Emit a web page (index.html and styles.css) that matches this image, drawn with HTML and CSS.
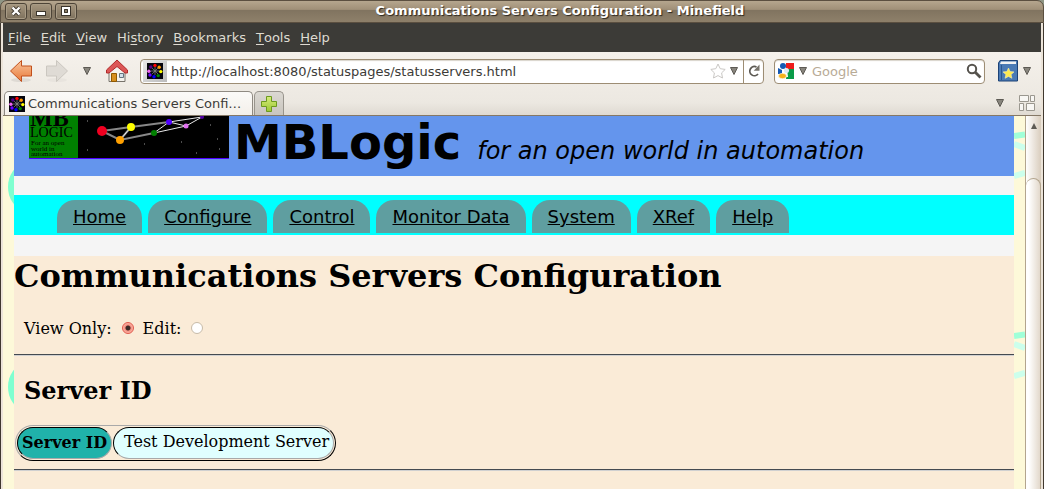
FILE: index.html
```html
<!DOCTYPE html>
<html lang="en">
<head>
<meta charset="utf-8">
<title>Communications Servers Configuration</title>
<link rel="stylesheet" href="styles.css">
</head>
<body>
<svg width="0" height="0" class="defs" aria-hidden="true">
  <defs>
    <linearGradient id="orange" x1="0" y1="0" x2="0" y2="1"><stop offset="0" stop-color="#f9c49a"/><stop offset="1" stop-color="#e8793a"/></linearGradient>
    <linearGradient id="lime" x1="0" y1="0" x2="0" y2="1"><stop offset="0" stop-color="#d6ec7c"/><stop offset="1" stop-color="#9cc832"/></linearGradient>
    <symbol id="favicon" viewBox="0 0 16 16">
      <rect width="16" height="16" fill="#04040e"/>
      <path d="M8 8V4M8 8l3-3M8 8h4M8 8l3 3M8 8v4M8 8l-3 3M8 8H4M8 8L5 5" stroke="#777" stroke-width=".8"/>
      <circle cx="8" cy="8" r="1.300" fill="#777"/>
      <circle cx="8" cy="2.400" r="1.700" fill="#f00"/><circle cx="12.200" cy="4.200" r="1.700" fill="#f90"/>
      <circle cx="13.800" cy="8.600" r="1.700" fill="#ff0"/><circle cx="11.200" cy="12.600" r="1.700" fill="#080"/>
      <circle cx="7" cy="13.800" r="1.700" fill="#00f"/><circle cx="3" cy="12" r="1.700" fill="#60f"/>
      <circle cx="1.900" cy="8.200" r="1.700" fill="#e6e"/><circle cx="3.800" cy="4" r="1.700" fill="#508"/>
    </symbol>
    <symbol id="caret" viewBox="0 0 8 8"><path d="M.5.5h7L4 7.500z" fill="#88857d" stroke="#5d5a54"/></symbol>
  </defs>
</svg>
<div class="window">
  <header class="titlebar">
    <div class="window-buttons">
      <button class="wbtn" aria-label="Close"><svg width="10" height="10" viewBox="0 0 10 10"><path d="M1.500 1.500l7 7M8.500 1.500l-7 7" stroke="#3b352c" stroke-width="4"/><path d="M1.500 1.500l7 7M8.500 1.500l-7 7" stroke="#fff" stroke-width="2.400"/></svg></button>
      <button class="wbtn" aria-label="Minimize"><svg width="10" height="10" viewBox="0 0 10 10"><path d="M0 5h10v5H0z" fill="#3b352c"/><path d="M1 6h8v3H1z" fill="#fff"/></svg></button>
      <button class="wbtn" aria-label="Maximize"><svg width="10" height="10" viewBox="0 0 10 10"><path d="M0 0h10v10H0z" fill="#3b352c"/><path d="M2 2h6v6H2z" fill="#8c8069" stroke="#fff" stroke-width="2"/><path d="M3.500 3.500h3v3h-3z" fill="none" stroke="#3b352c"/></svg></button>
    </div>
    <div class="window-title">Communications Servers Configuration - Minefield</div>
  </header>
  <div class="frame">
    <nav class="menubar">
      <button><u>F</u>ile</button><button><u>E</u>dit</button><button><u>V</u>iew</button><button>Hi<u>s</u>tory</button><button><u>B</u>ookmarks</button><button><u>T</u>ools</button><button><u>H</u>elp</button>
    </nav>
    <div class="chrome">
      <div class="toolbar">
        <div class="nav-buttons">
          <button aria-label="Back"><svg width="24" height="24" viewBox="0 0 24 24"><ellipse cx="12" cy="21" rx="10" ry="2" fill="#dedad4"/><path d="M1.500 12L12.500 1.500V7H22.500v10H12.500v5.500z" fill="url(#orange)" stroke="#c2501c"/></svg></button>
          <button aria-label="Forward"><svg width="24" height="24" viewBox="0 0 24 24"><ellipse cx="12" cy="21" rx="10" ry="2" fill="#e8e4de"/><path d="M22.500 12L11.500 1.500V7H1.500v10h10v5.500z" fill="#dfdbd5" stroke="#cbc7c0"/></svg></button>
          <button aria-label="Recent pages"><svg width="8" height="8"><use href="#caret"/></svg></button>
          <button aria-label="Home"><svg width="24" height="24" viewBox="0 0 24 24"><path d="M4 11l8-7 8 7v11.500H4z" fill="#f4f2ed" stroke="#77736b"/><path d="M6.500 14.500h5v8h-5z" fill="#d78f1e" stroke="#8f5902"/><path d="M14.500 14.500h4v4h-4z" fill="#d3e0ea" stroke="#64737e"/><path d="M12 1L1.500 11v3h2.500L12 7.500l8 6.500h2.500v-3z" fill="#dc5656" stroke="#b02a2a"/></svg></button>
        </div>
        <div class="field url">
          <span class="site-icon"><svg width="16" height="16"><use href="#favicon"/></svg></span>
          <input type="text" aria-label="Address" value="http://localhost:8080/statuspages/statusservers.html">
          <button aria-label="Bookmark this page"><svg width="16" height="16" viewBox="0 0 16 16"><path d="M8 1l2.200 4.700 5 .7-3.600 3.500.9 5.100L8 12.600 3.500 15l.9-5.100L.8 6.400l5-.7z" fill="#fff" stroke="#c9c7c4"/></svg></button>
          <button class="drop" aria-label="Address history"><svg width="8" height="8"><use href="#caret"/></svg></button>
          <button class="reload" aria-label="Reload"><svg width="14" height="14" viewBox="0 0 14 14"><path d="M9.500 3A4.600 4.600 0 1 0 11 10" fill="none" stroke="#5d5a54" stroke-width="1.800"/><path d="M12.500.5v6.200H6.700z" fill="#77736b"/></svg></button>
        </div>
        <div class="field search">
          <button aria-label="Search engine" class="engine"><svg width="16" height="16" viewBox="0 0 16 16"><path d="M8 0h8v7H8z" fill="#ed1c1c"/><path d="M9 6h7v10H8z" fill="#0a9b48"/><path d="M1 6h8l1 8H0z" fill="#fff"/><ellipse cx="5" cy="3" rx="3" ry="3" fill="#1559b5"/><path d="M0 5l4 2v4H0z" fill="#1559b5"/><circle cx="8.500" cy="7.500" r="2.500" fill="#dfe9f5"/><ellipse cx="4.500" cy="13" rx="4" ry="2.700" fill="#f6b21a" stroke="#fff" stroke-width=".6"/></svg><svg width="8" height="8"><use href="#caret"/></svg></button>
          <input type="text" aria-label="Search" placeholder="Google">
          <button aria-label="Search"><svg width="16" height="16" viewBox="0 0 16 16"><circle cx="6" cy="6" r="4.200" fill="#fff" stroke="#55524c" stroke-width="2"/><path d="M9 9l5.500 5.500" stroke="#55524c" stroke-width="2.800"/></svg></button>
        </div>
        <button class="bookmarks" aria-label="Bookmarks"><svg width="20" height="22" viewBox="0 0 20 22"><path d="M.5 3L2 .5h17.500V21H.5z" fill="#4a7ab5" stroke="#1d4377"/><path d="M3 1.500h15V4H2z" fill="#f2f2f2"/><path d="M3.500 5v15" stroke="#2b568f"/><path d="M10.500 8l1.600 3.500 3.900.4-2.900 2.600.8 3.800-3.400-1.900-3.400 1.900.8-3.800L5 11.900l3.900-.4z" fill="#fde94f" stroke="#f7efb0" stroke-width=".6"/></svg><svg width="8" height="8"><use href="#caret"/></svg></button>
      </div>
      <div class="tabstrip">
        <button class="tab"><svg width="16" height="16"><use href="#favicon"/></svg><span>Communications Servers Confi…</span></button>
        <button class="newtab" aria-label="New tab"><svg width="16" height="16" viewBox="0 0 16 16"><path d="M5.500.5h5v5h5v5h-5v5h-5v-5h-5v-5h5z" fill="url(#lime)" stroke="#6d9a1f"/></svg></button>
        <span class="spacer"></span>
        <button aria-label="List tabs"><svg width="8" height="8"><use href="#caret"/></svg></button>
        <button aria-label="Tab groups"><svg width="16" height="16" viewBox="0 0 16 16"><path d="M.5.5h9v6h-9zM11.500.5h4v6h-4zM.5 8.500h4v7h-4zM7.500 8.500h8v7h-8z" fill="#f8f7f4" stroke="#9a978f"/></svg></button>
      </div>
    </div>
    <div class="viewport">
      <svg class="gutter" aria-hidden="true"><defs><pattern id="ring" width="11" height="200" patternUnits="userSpaceOnUse"><ellipse cx="21" cy="71" rx="16" ry="22" fill="#7fffd0"/></pattern></defs><rect width="11" height="100%" fill="url(#ring)"/></svg>
      <main class="page">
        <div class="banner">
          <svg class="logo" width="200" height="43" viewBox="0 0 200 43" role="img" aria-label="MB Logic">
            <rect width="200" height="43" fill="#000"/><rect width="49" height="42" fill="#008000"/>
            <g font-family="'Liberation Serif', serif" fill="#000">
              <text x="1" y="10" font-size="24" font-weight="bold">MB</text>
              <text x="1" y="21" font-size="14">LOGIC</text>
              <text x="2" y="29" font-size="7">For an open</text><text x="2" y="35" font-size="7">world in</text><text x="2" y="40" font-size="7">automation</text>
            </g>
            <path d="M73 15l29-4 38-5M73 15l18 9 34-7M102 11l-11 13" fill="none" stroke="#888" stroke-width="2"/>
            <path d="M102 11l-11 13M125 17l15-11 33-5-16 9-32 7M140 6l17 4" fill="none" stroke="#e8e8e8"/>
            <circle cx="73" cy="15" r="5" fill="#f00020"/><circle cx="102" cy="11" r="4" fill="#ff0"/><circle cx="91" cy="24" r="4" fill="#ffa000"/><circle cx="125" cy="17" r="3" fill="#008000"/><circle cx="140" cy="6" r="3" fill="#5000ff"/><circle cx="157" cy="10" r="2.500" fill="#e070f0"/><circle cx="173" cy="1" r="2" fill="#5000a0"/>
            <path d="M58 5h1M58 34h1M115 28h1M152 26h1M181 9h1M190 33h1M167 37h1M188 23h1" stroke="#999"/>
            <path d="M0 42.500h200" stroke="#5000ff"/>
          </svg>
          <span class="brand">MBLogic</span><em class="tagline">for an open world in automation</em>
        </div>
        <nav class="sitenav">
          <a href="#">Home</a><a href="#">Configure</a><a href="#">Control</a><a href="#">Monitor Data</a><a href="#">System</a><a href="#">XRef</a><a href="#">Help</a>
        </nav>
        <section class="content">
          <h1>Communications Servers Configuration</h1>
          <form class="mode">
            <label for="view">View Only:</label><input type="radio" name="mode" id="view" checked>
            <label for="edit">Edit:</label><input type="radio" name="mode" id="edit">
          </form>
          <hr>
          <h2>Server ID</h2>
          <table class="server"><tr><th scope="row">Server ID</th><td>Test Development Server</td></tr></table>
          <hr>
        </section>
      </main>
      <svg class="gutter" aria-hidden="true"><defs><pattern id="rays" width="11" height="200" patternUnits="userSpaceOnUse"><path d="M0 20l11-1.500" stroke="#a0ffd8" stroke-width="6"/><path d="M0 28l11 4M0 60l11-3" stroke="#ccffec" stroke-width="6"/></pattern></defs><rect width="11" height="100%" fill="url(#rays)"/></svg>
      <div class="scrollbar"><button class="up" aria-label="Scroll up"><svg width="6" height="6" viewBox="0 0 6 6"><path d="M0 6h6L3 0z" fill="#5d5a54"/></svg></button><div class="thumb"></div></div>
    </div>
  </div>
</div>
</body>
</html>
```
FILE: styles.css
```css
* { box-sizing: border-box; }
body { margin: 0; font-family: "DejaVu Sans", sans-serif; font-size: 13px; color: #3c3b37; background: #8f9685; }
button { margin: 0; padding: 0; border: 0; background: none; font: inherit; color: inherit; display: flex; align-items: center; justify-content: center; }
svg { display: block; flex: none; }
.defs { position: absolute; }
.window { height: 100vh; display: flex; flex-direction: column; overflow: hidden; }

.titlebar { height: 23px; flex: none; display: flex; align-items: center; padding-left: 4px; border: 1px solid #5b4f40; border-radius: 7px 7px 0 0; background: linear-gradient(#b5a68e, #a09078 40%, #817460 45%, #8e806a); }
.window-buttons { display: flex; gap: 3px; padding-bottom: 1px; }
.wbtn { width: 22px; height: 17px; border: 1px solid #4d4437; border-radius: 3px; background: linear-gradient(#a6977f, #7e715d); box-shadow: inset 0 0 0 1px #a89b85; }
.window-title { flex: 1; text-align: center; font-weight: bold; font-size: 13px; line-height: 20px; padding-bottom: 2px; color: #fff; text-shadow: 1px 1px 1px #2b261e; }

.frame { flex: 1; min-height: 0; display: flex; flex-direction: column; border-left: 1px solid #40382e; border-right: 1px solid #40382e; padding: 0 2px; background: #ece4d9; }
.menubar { height: 29px; flex: none; display: flex; align-items: center; gap: 10px; padding: 0 5px; background: #3c3b37; color: #dfdbd2; }
.menubar u { text-underline-offset: 2px; }

.chrome { flex: none; background: linear-gradient(#f5f1eb, #ece8e1 80%, #dfdad2); border-bottom: 1px solid #857866; }
.toolbar { height: 39px; display: flex; align-items: center; padding: 0 10px 1px 6px; }
.nav-buttons { display: flex; align-items: center; gap: 12px; padding-right: 11px; }
.nav-buttons button:nth-child(3) { padding: 0 2px; }
.field { height: 25px; display: flex; align-items: center; border: 1px solid #9d8d74; border-radius: 4px; background: #fff; overflow: hidden; box-shadow: inset 0 1px 1px #d9d4cb; }
.field input { flex: 1; min-width: 0; border: 0; outline: 0; padding: 0; background: none; font: inherit; color: inherit; }
.field input::placeholder { color: #b8ab96; opacity: 1; }
.url { flex: 1; padding-left: 2px; gap: 2px; }
.url input { padding-left: 2px; }
.site-icon { padding: 3px 4px; background: linear-gradient(135deg, #e8e8e8, #bbb); }
.drop { padding: 0 3px 0 2px; }
.reload { width: 20px; align-self: stretch; border-left: 1px solid #9d8d74; }
.search { flex: 0 1 211px; margin-left: 10px; padding: 0 2px 0 3px; gap: 5px; }
.engine { gap: 5px; }
.bookmarks { gap: 5px; margin-left: 13px; }

.tabstrip { height: 24px; display: flex; align-items: center; padding: 0 6px 0 1px; gap: 1px; }
.tab { width: 249px; height: 24px; justify-content: flex-start; gap: 3px; padding: 0 4px; border: 1px solid #8f8a82; border-bottom: 0; border-radius: 5px 5px 0 0; background: linear-gradient(#fbfaf8, #f4f0ea); }
.newtab { width: 30px; height: 24px; border: 1px solid #98948c; border-bottom: 0; border-radius: 5px 5px 0 0; background: linear-gradient(#dbd8d2, #c9c5be); }
.spacer { flex: 1; }
.tabstrip button:last-child { margin-left: 14px; }

.viewport { flex: 1; min-height: 0; display: grid; grid-template-columns: 11px minmax(0, 1fr) 11px 16px; overflow: hidden; background: #fdf9d9; }
.gutter { width: 11px; height: 100%; }
.page { background: #f5f5f5; color: #000; font-family: "DejaVu Serif", serif; font-size: 16px; min-height: 0; }
.banner { height: 60px; display: flex; align-items: baseline; padding-left: 15px; background: #6495ed; overflow: hidden; font-family: "DejaVu Sans", sans-serif; white-space: nowrap; }
.logo { align-self: flex-start; }
.brand { margin-left: 5px; font-size: 48px; line-height: 52px; font-weight: bold; }
.tagline { margin-left: 16px; font-size: 24px; }
.sitenav { height: 40px; margin: 19px 0 21px; display: flex; gap: 6px; padding: 5px 0 2px 43px; background: #0ff; font-family: "DejaVu Sans", sans-serif; font-size: 18px; line-height: 33px; white-space: nowrap; }
.sitenav a { padding: 0 16px; color: #000; background: #5f9ea0; border-radius: 18px 18px 0 0; }
.content { background: #faebd7; padding-bottom: 40px; }
h1 { margin: 0; font-size: 32px; line-height: 40px; white-space: nowrap; }
.mode { display: flex; align-items: center; gap: 10px; padding: 23px 10px 15px; line-height: 20px; }
.mode input { appearance: none; width: 12px; height: 12px; margin: 0 -1px 2px 0; border: 1px solid #c8bba8; border-radius: 50%; background: #fff; }
.mode input:checked { border-color: #e0584a; background: radial-gradient(circle, #3b2a26 0 2px, #f58f80 3px, #fbb5a8 5px); }
hr { margin: 0; border: 0; border-top: 1px solid #444a50; border-bottom: 1px solid #d0d0d0; }
h2 { margin: 20px 10px 19px; font-size: 24px; line-height: 30px; }
.server { margin-left: 1px; margin-bottom: 8px; border: 1px solid; border-color: #a9a9a9 #000 #000 #a9a9a9; border-radius: 18px; border-spacing: 1px; line-height: 20px; }
.server th, .server td { border: 1px solid; border-color: #000 #a9a9a9 #a9a9a9 #000; border-radius: 16px; padding: 5px 4px; }
.server th { background: #20b2aa; }
.server td { background: #e0ffff; padding: 4px 4px 6px 10px; }

.scrollbar { display: flex; flex-direction: column; border-left: 1px solid #b3a58e; background: linear-gradient(90deg, #fff, #d9cdbd); }
.up { height: 20px; }
.thumb { flex: 1; margin-top: 42px; border: 1px solid #b3a58e; border-width: 1px 1px 0 0; border-radius: 8px 8px 0 0; background: linear-gradient(90deg, #fff 20%, #e2d8cb); }
```
